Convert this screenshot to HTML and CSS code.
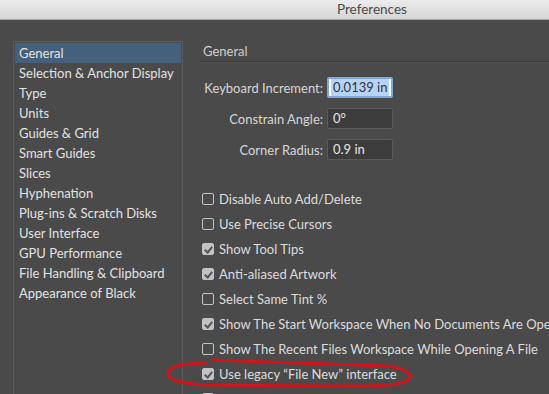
FILE: index.html
```html
<!DOCTYPE html>
<html lang="en-us">
<head>
  <meta charset="UTF-8">
  <title>Preferences</title>
  <link rel="stylesheet" href="styles.css">
</head>
<body>
  <div class="window">
    <div class="titlebar"><span class="title">Preferences</span></div>
    <div class="content">
      <ul class="nav">
        <li class="active">General</li>
        <li>Selection &amp; Anchor Display</li>
        <li>Type</li>
        <li>Units</li>
        <li>Guides &amp; Grid</li>
        <li>Smart Guides</li>
        <li>Slices</li>
        <li>Hyphenation</li>
        <li>Plug-ins &amp; Scratch Disks</li>
        <li>User Interface</li>
        <li>GPU Performance</li>
        <li>File Handling &amp; Clipboard</li>
        <li>Appearance of Black</li>
      </ul>
      <div class="panel">
        <h2 class="panel-title">General</h2>
        <div class="fields">
          <label>Keyboard Increment:</label>
          <div class="field selected"><span class="sel">0.0139 in</span></div>
          <label>Constrain Angle:</label>
          <div class="field">0°</div>
          <label>Corner Radius:</label>
          <div class="field">0.9 in</div>
        </div>
        <ul class="checks">
          <li><span class="box"></span>Disable Auto Add/Delete</li>
          <li><span class="box"></span>Use Precise Cursors</li>
          <li><span class="box on"></span>Show Tool Tips</li>
          <li><span class="box on"></span>Anti-aliased Artwork</li>
          <li><span class="box"></span>Select Same Tint %</li>
          <li><span class="box on"></span>Show The Start Workspace When No Documents Are Open</li>
          <li><span class="box"></span>Show The Recent Files Workspace While Opening A File</li>
          <li><span class="box on"></span>Use legacy “File New” interface</li>
          <li><span class="box"></span></li>
        </ul>
      </div>
    </div>
    <!-- hand-drawn highlight -->
    <svg class="marker" width="549" height="394" viewBox="0 0 549 394">
      <path d="M213,360 C260,362 340,364 386,366 C404,368 413,373 409,379 C403,386 382,386 330,386 L205,385 C184,384 167,380 168,373 C169,366 182,364 206,363"
            fill="none" stroke="#d3131a" stroke-width="3" stroke-linecap="round"/>
    </svg>
  </div>
</body>
</html>
```

FILE: styles.css
```css
html,
body {
  margin: 0;
  height: 100%;
  overflow: hidden;
}
body {
  font-family: Lato, "Open Sans", sans-serif;
  font-size: 13px;
  background: #4a4a4a;
  color: #dcdcdc;
}
.window {
  position: relative;
  height: 394px;
  width: 549px;
  overflow: hidden;
}
.titlebar {
  height: 19px;
  line-height: 19px;
  background: linear-gradient(#ececec, #d5d5d5);
  border-bottom: 1px solid #a8a8a8;
  padding-left: 337px;
  color: #4a4a4a;
  font-size: 13.5px;
}
.content {
  display: flex;
  padding: 21px 0 0 13px;
}
.nav {
  list-style: none;
  margin: 0;
  padding: 1px;
  width: 166px;
  height: 400px;
  border: 1px solid #5c5c5c;
  flex-shrink: 0;
}
.nav li {
  height: 20px;
  line-height: 20px;
  padding-left: 4px;
  white-space: nowrap;
  color: #e2e2e2;
}
.nav li.active {
  background: #45607a;
}
.panel {
  flex: 1;
  margin-left: 16px;
  min-width: 0;
}
.panel-title {
  margin: 0;
  font-size: 13px;
  font-weight: normal;
  height: 20px;
  line-height: 21px;
  padding-left: 4px;
  color: #cfcfcf;
  border-bottom: 1px solid #3c3c3c;
  box-shadow: 0 1px 0 #525252;
}
.fields {
  display: grid;
  grid-template-columns: 120px 66px;
  column-gap: 4px;
  row-gap: 10px;
  margin: 15px 0 0 4px;
  align-items: center;
}
.fields label {
  text-align: right;
  white-space: nowrap;
  color: #d6d6d6;
}
.field {
  height: 21px;
  line-height: 19px;
  box-sizing: border-box;
  border: 1px solid #5a5a5a;
  border-radius: 2px;
  background: #3c3c3c;
  padding-left: 5px;
  color: #e6e6e6;
  white-space: nowrap;
  overflow: hidden;
}
.field.selected {
  background: #fff;
  border: 2px solid #7ea9dc;
  line-height: 17px;
  padding-left: 2px;
  color: #333;
}
.sel {
  background: #b5d4f8;
  padding: 1px 2px;
}
.checks {
  list-style: none;
  margin: 26px 0 0 3px;
  padding: 0;
}
.checks li {
  display: flex;
  align-items: center;
  height: 25px;
  white-space: nowrap;
}
.box {
  width: 12px;
  height: 12px;
  box-sizing: border-box;
  border: 1px solid #c4c4c4;
  border-radius: 2px;
  margin-right: 5px;
  flex-shrink: 0;
  position: relative;
}
.box.on {
  background: #c2c2c2;
}
.box.on::after {
  content: "";
  position: absolute;
  left: 3px;
  top: 1px;
  width: 3px;
  height: 6px;
  border: solid #555;
  border-width: 0 2px 2px 0;
  transform: rotate(40deg);
}
.marker {
  position: absolute;
  left: 0;
  top: 0;
  pointer-events: none;
}
```
